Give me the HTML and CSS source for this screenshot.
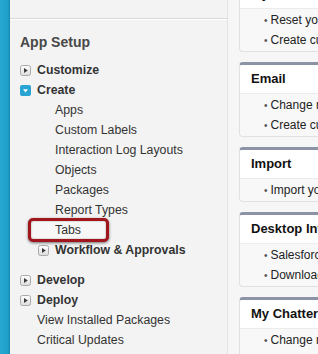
FILE: index.html
```html
<!DOCTYPE html>
<html>
<head>
<meta charset="utf-8">
<link rel="stylesheet" href="styles.css">
</head>
<body>
<div class="page">
  <div class="rail"></div>
  <nav class="sidebar">
    <div class="prev">
      <div class="prev-item">My Chatter Settings</div>
    </div>
    <h2 class="heading">App Setup</h2>
    <ul class="tree">
      <li class="node"><svg class="tw" viewBox="0 0 11 11"><defs><linearGradient id="g1" x1="0" y1="0" x2="0" y2="1"><stop offset="0" stop-color="#ffffff"/><stop offset="1" stop-color="#dcdcdc"/></linearGradient></defs><rect x="0.5" y="0.5" width="10" height="10" rx="2" fill="url(#g1)" stroke="#a9a9a9"/><path d="M4 3 L7.8 5.5 L4 8 Z" fill="#3c3c3c"/></svg><span class="bold">Customize</span></li>
      <li class="node"><svg class="tw" viewBox="0 0 11 11"><rect x="0" y="0" width="11" height="11" rx="2" fill="#27a4d1"/><path d="M3 4.2 L8 4.2 L5.5 7.6 Z" fill="#ffffff"/></svg><span class="bold">Create</span></li>
      <li class="sub">Apps</li>
      <li class="sub">Custom Labels</li>
      <li class="sub">Interaction Log Layouts</li>
      <li class="sub">Objects</li>
      <li class="sub">Packages</li>
      <li class="sub">Report Types</li>
      <li class="sub highlight"><span class="callout"></span><span class="label">Tabs</span></li>
      <li class="node subnode"><svg class="tw" viewBox="0 0 11 11"><defs><linearGradient id="g2" x1="0" y1="0" x2="0" y2="1"><stop offset="0" stop-color="#ffffff"/><stop offset="1" stop-color="#dcdcdc"/></linearGradient></defs><rect x="0.5" y="0.5" width="10" height="10" rx="2" fill="url(#g2)" stroke="#a9a9a9"/><path d="M4 3 L7.8 5.5 L4 8 Z" fill="#3c3c3c"/></svg><span class="bold">Workflow &amp; Approvals</span></li>
      <li class="node gap"><svg class="tw" viewBox="0 0 11 11"><defs><linearGradient id="g3" x1="0" y1="0" x2="0" y2="1"><stop offset="0" stop-color="#ffffff"/><stop offset="1" stop-color="#dcdcdc"/></linearGradient></defs><rect x="0.5" y="0.5" width="10" height="10" rx="2" fill="url(#g3)" stroke="#a9a9a9"/><path d="M4 3 L7.8 5.5 L4 8 Z" fill="#3c3c3c"/></svg><span class="bold">Develop</span></li>
      <li class="node"><svg class="tw" viewBox="0 0 11 11"><defs><linearGradient id="g4" x1="0" y1="0" x2="0" y2="1"><stop offset="0" stop-color="#ffffff"/><stop offset="1" stop-color="#dcdcdc"/></linearGradient></defs><rect x="0.5" y="0.5" width="10" height="10" rx="2" fill="url(#g4)" stroke="#a9a9a9"/><path d="M4 3 L7.8 5.5 L4 8 Z" fill="#3c3c3c"/></svg><span class="bold">Deploy</span></li>
      <li class="leaf">View Installed Packages</li>
      <li class="leaf">Critical Updates</li>
    </ul>
  </nav>
  <main class="main">
    <section class="card first">
      <div class="card-head">My Personal Information</div>
      <ul class="card-list">
        <li>Reset your security token</li>
        <li>Create custom views</li>
      </ul>
    </section>
    <section class="card">
      <div class="card-head">Email</div>
      <ul class="card-list">
        <li>Change my email settings</li>
        <li>Create custom templates</li>
      </ul>
    </section>
    <section class="card">
      <div class="card-head">Import</div>
      <ul class="card-list">
        <li>Import your contacts</li>
      </ul>
    </section>
    <section class="card">
      <div class="card-head">Desktop Integration</div>
      <ul class="card-list">
        <li>Salesforce for Outlook</li>
        <li>Download Connect</li>
      </ul>
    </section>
    <section class="card">
      <div class="card-head">My Chatter Settings</div>
      <ul class="card-list">
        <li>Change my email settings</li>
        <li>Change my photo</li>
      </ul>
    </section>
  </main>
</div>
</body>
</html>
```

FILE: styles.css
```css
html, body {
  margin: 0;
  padding: 0;
  height: 100%;
  overflow: hidden;
}
body {
  font-family: "Liberation Sans", Arial, Helvetica, sans-serif;
  font-size: 12px;
  color: #333;
  background: #f3f3f3;
}
.page {
  display: flex;
  height: 354px;
  width: 318px;
  overflow: hidden;
}
.rail {
  flex: 0 0 10px;
  background: linear-gradient(to right, #25a8d2 0%, #1fa0ca 75%, #168ab3 100%);
}
.sidebar {
  flex: 0 0 217px;
  background: #f3f3f3;
  border-right: 1px solid #e2e2e2;
  box-shadow: 1px 0 0 #d6d6d6;
}
.prev {
  height: 18px;
  overflow: hidden;
  border-bottom: 1px solid #d9d9d9;
  box-shadow: 0 1px 0 #ffffff;
}
.prev-item {
  margin-top: -17px;
  padding-left: 27px;
  line-height: 20px;
  color: #333;
}
.heading {
  margin: 13px 0 8px 10px;
  font-size: 14px;
  font-weight: bold;
  line-height: 20px;
  color: #484848;
}
.tree {
  list-style: none;
  margin: 0;
  padding: 0 0 0 10px;
}
.tree li {
  line-height: 20px;
  height: 20px;
  white-space: nowrap;
  font-size: 12.3px;
}
.node {
  display: flex;
  align-items: center;
}
.tw {
  width: 11px;
  height: 11px;
  margin-right: 6px;
  flex: 0 0 11px;
}
.bold {
  font-weight: bold;
  color: #333;
}
.sub {
  padding-left: 35px;
}
.subnode {
  padding-left: 18px;
}
.gap {
  margin-top: 10px;
}
.leaf {
  padding-left: 17px;
}
.highlight {
  position: relative;
}
.label {
  position: relative;
  color: #333;
}
.callout {
  position: absolute;
  left: 8px;
  top: -2px;
  width: 75px;
  height: 18px;
  border: 3px solid #a1161c;
  border-radius: 5px;
  box-shadow: 0 1px 3px rgba(0, 0, 0, 0.55), inset 0 0 2px rgba(0, 0, 0, 0.35);
  background: #f7f7f7;
}
.main {
  flex: 1 1 auto;
  background: #f6f6f6;
  padding-left: 11px;
  overflow: hidden;
  min-width: 0;
}
.card {
  width: 260px;
  background: #f8f8f8;
  border: 1px solid #e1e1e1;
  border-top: 3px solid #8b93a5;
  border-radius: 4px;
  margin-bottom: 10px;
  overflow: hidden;
}
.card.first {
  margin-top: -23px;
}
.card-head {
  height: 28px;
  line-height: 28px;
  padding-left: 11px;
  font-size: 13px;
  font-weight: bold;
  color: #111;
  background: #ffffff;
  border-bottom: 1px solid #ececec;
  white-space: nowrap;
}
.card-list {
  list-style: none;
  margin: 0;
  padding: 1px 0 1px 0;
}
.card-list li {
  line-height: 20px;
  height: 20px;
  padding-left: 24px;
  color: #222;
  white-space: nowrap;
}
.card-list li::before {
  content: "\2022";
  color: #555;
  font-size: 10px;
  margin-right: 3px;
}
```
